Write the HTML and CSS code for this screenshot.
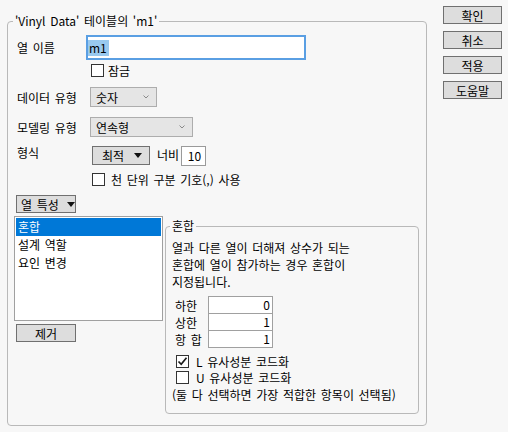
FILE: index.html
```html
<!DOCTYPE html>
<html lang="ko">
<head>
<meta charset="utf-8">
<link rel="stylesheet" href="styles.css">
</head>
<body>
<div class="dialog">
  <fieldset class="main">
    <legend>'Vinyl Data' 테이블의 'm1'</legend>

    <div class="row r-name">
      <span class="label">열 이름</span>
      <div class="textbox"><span class="sel">m1</span></div>
    </div>

    <div class="check r-lock"><span class="box"></span><span>잠금</span></div>

    <div class="row r-dtype">
      <span class="label">데이터 유형</span>
      <div class="combo w67"><span>숫자</span><svg class="chev" width="6" height="4" viewBox="0 0 6 4"><path d="M0.5 0.5L3 3L5.5 0.5"/></svg></div>
    </div>

    <div class="row r-mtype">
      <span class="label">모델링 유형</span>
      <div class="combo w103"><span>연속형</span><svg class="chev" width="6" height="4" viewBox="0 0 6 4"><path d="M0.5 0.5L3 3L5.5 0.5"/></svg></div>
    </div>

    <div class="row r-fmt">
      <span class="label">형식</span>
      <div class="btn fmt-btn"><span>최적</span><svg class="tri" width="8" height="5" viewBox="0 0 8 5"><path d="M0 0H8L4 5Z"/></svg></div>
      <span class="width-label">너비</span>
      <div class="num-small">10</div>
    </div>

    <div class="check r-sep"><span class="box"></span><span>천 단위 구분 기호(,) 사용</span></div>

    <div class="btn prop-btn"><span>열 특성</span><svg class="tri" width="8" height="5" viewBox="0 0 8 5"><path d="M0 0H8L4 5Z"/></svg></div>

    <div class="split">
      <div class="leftcol">
        <div class="list">
          <div class="item on">혼합</div>
          <div class="item">설계 역할</div>
          <div class="item">요인 변경</div>
        </div>
        <div class="btn remove">제거</div>
      </div>

      <fieldset class="mix">
        <legend>혼합</legend>
        <div class="desc">열과 다른 열이 더해져 상수가 되는<br>혼합에 열이 참가하는 경우 혼합이<br>지정됩니다.</div>
        <div class="limits">
          <div class="lim-row"><span class="lim-label">하한</span><div class="field">0</div></div>
          <div class="lim-row"><span class="lim-label">상한</span><div class="field">1</div></div>
          <div class="lim-row"><span class="lim-label">항 합</span><div class="field">1</div></div>
        </div>
        <div class="check r-l"><span class="box"><svg width="11" height="11" viewBox="0 0 11 11"><path class="tick" d="M1.5 5.5L4.2 8.3L9.5 1.8"/></svg></span><span>L 유사성분 코드화</span></div>
        <div class="check r-u"><span class="box"></span><span>U 유사성분 코드화</span></div>
        <div class="note">(둘 다 선택하면 가장 적합한 항목이 선택됨)</div>
      </fieldset>
    </div>
  </fieldset>

  <div class="side">
    <div class="btn side-btn">확인</div>
    <div class="btn side-btn">취소</div>
    <div class="btn side-btn">적용</div>
    <div class="btn side-btn">도움말</div>
  </div>
</div>
</body>
</html>
```

FILE: styles.css
```css
* { box-sizing: border-box; }

body {
  margin: 0;
  background: #f7f7f7;
  font-family: "Noto Sans CJK KR", "Noto Sans", sans-serif;
  font-size: 12px;
  line-height: 17px;
  color: #000;
  word-spacing: 1.3px;
}

.dialog {
  display: flex;
  align-items: flex-start;
  padding: 6px 0 0 7px;
}

.main {
  margin: 7px 0 0;
  width: 420px;
  height: 413px;
  border: 1px solid #b9b9b9;
  border-radius: 4px;
  padding: 6px 7px 0 6px;
  min-width: 0;
}

.main > legend {
  padding: 0 2px;
  margin-left: -1px;
  line-height: 16px;
}

.row {
  display: flex;
  align-items: center;
  margin-left: 3px;
}

.label { flex: none; }

.r-name { height: 25px; }
.r-name .label { width: 69px; }

.textbox {
  width: 220px;
  height: 25px;
  border: 2px solid #5a9fe3;
  background: #fff;
  padding: 2px 0 0 0;
}

.sel {
  display: inline-block;
  background: #99c9ef;
  line-height: 16px;
  padding: 0 2px 0 1px;
}

.check {
  display: flex;
  align-items: center;
  height: 17px;
  gap: 4px;
}

.box {
  flex: none;
  width: 13px;
  height: 13px;
  border: 1px solid #333;
  background: #fff;
  display: flex;
  align-items: center;
  justify-content: center;
}

.tick {
  fill: none;
  stroke: #1a1a1a;
  stroke-width: 1.7;
}

.r-lock { margin: 2px 0 0 77px; }

.r-dtype { margin-top: 8px; height: 20px; }
.r-mtype { margin-top: 10px; height: 20px; }
.r-dtype .label, .r-mtype .label { width: 73px; }

.combo {
  height: 20px;
  border: 1px solid #adadad;
  background: #e5e5e5;
  display: flex;
  align-items: center;
  justify-content: space-between;
  padding: 0 7px 0 5px;
}

.w67 { width: 67px; }
.w103 { width: 103px; }

.chev path {
  fill: none;
  stroke: #8a8a8a;
  stroke-width: 1;
}

.tri path { fill: #111; }

.r-fmt {
  margin-top: 9px;
  height: 20px;
  align-items: flex-start;
}

.r-fmt .label {
  width: 75px;
  line-height: 13px;
}

.btn {
  height: 18px;
  border: 1px solid #707070;
  background: #dddddd;
  display: flex;
  align-items: center;
  justify-content: center;
}

.fmt-btn {
  width: 58px;
  height: 19px;
  gap: 10px;
  padding-left: 2px;
}

.width-label { margin-left: 7px; }

.num-small {
  margin-left: 2px;
  width: 25px;
  height: 20px;
  border: 1px solid #9a9a9a;
  background: #fff;
  text-align: right;
  padding-right: 4px;
  line-height: 18px;
}

.r-sep { margin: 5px 0 0 78px; gap: 6px; }

.prop-btn {
  width: 60px;
  margin: 7px 0 0 2px;
  justify-content: flex-start;
  padding-left: 4px;
  gap: 8px;
}

.split {
  display: flex;
  align-items: flex-start;
  margin-top: 3px;
}

.leftcol {
  flex: none;
  width: 149px;
}

.list {
  height: 105px;
  border: 1px solid #a0a0a0;
  background: #fff;
  padding: 1px;
}

.item {
  height: 18px;
  line-height: 18px;
  padding-left: 2px;
}

.item.on {
  background: #0078d7;
  color: #fff;
}

.remove {
  width: 60px;
  margin: 3px 0 0 2px;
}

.mix {
  margin: 2px 0 0 2px;
  width: 254px;
  height: 196px;
  border: 1px solid #b9b9b9;
  border-radius: 4px;
  padding: 5px 6px 0 6px;
  min-width: 0;
}

.mix > legend {
  padding: 0 2px;
  margin-left: -2px;
  line-height: 16px;
}

.limits { margin-top: 6px; }

.lim-row {
  display: flex;
  align-items: center;
  margin-left: 3px;
}

.lim-row + .lim-row { margin-top: -1px; }

.lim-label {
  width: 33px;
  flex: none;
}

.field {
  width: 65px;
  height: 18px;
  border: 1px solid #a0a0a0;
  background: #fff;
  text-align: right;
  padding-right: 2px;
  line-height: 16px;
}

.r-l { margin: 5px 0 0 4px; height: 16px; gap: 7px; }
.r-u { margin: 0 0 0 4px; height: 16px; gap: 7px; }

.note { margin-top: 1px; }

.side {
  margin-left: 16px;
  display: flex;
  flex-direction: column;
  gap: 7px;
}

.side-btn {
  width: 59px;
  height: 18px;
}
```
